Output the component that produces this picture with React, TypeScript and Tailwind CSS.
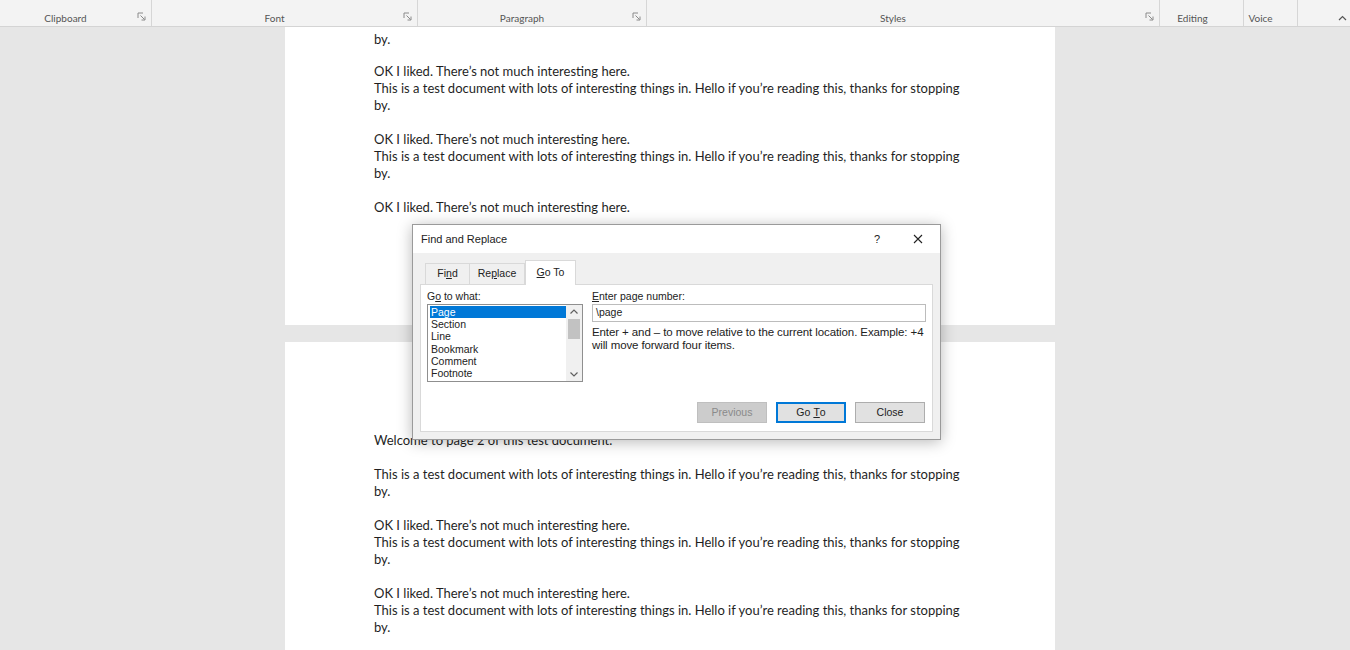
const longLine =
  "This is a test document with lots of interesting things in. Hello if you\u2019re reading this, thanks for stopping";
const okLine = "OK I liked. There\u2019s not much interesting here.";

function Launcher() {
  return (
    <svg width="9" height="9" viewBox="0 0 9 9" className="mb-[2px]">
      <path d="M1 1h5M1 1v5" stroke="#8a8a8a" strokeWidth="1" fill="none" />
      <path d="M3.5 3.5l4 4M8 4.5v3.5h-3.5" stroke="#8a8a8a" strokeWidth="1" fill="none" />
    </svg>
  );
}

function Group({ label, width, launcher = true }: { label: string; width: number; launcher?: boolean }) {
  return (
    <div className="flex items-end h-full border-r border-[#d6d6d6] pb-[3px]" style={{ width }}>
      <div className="flex-1 text-center text-[10px] text-[#555] leading-none">{label}</div>
      <div className="w-[20px] flex justify-center">{launcher && <Launcher />}</div>
    </div>
  );
}

function Ribbon() {
  return (
    <div className="h-[27px] bg-[#f3f3f3] border-b border-[#d4d4d4] flex">
      <Group label="Clipboard" width={152} />
      <Group label="Font" width={266} />
      <Group label="Paragraph" width={229} />
      <Group label="Styles" width={513} />
      <div className="w-[2px]" />
      <Group label="Editing" width={82} launcher={false} />
      <Group label="Voice" width={54} launcher={false} />
      <div className="flex-1 flex justify-end items-end pr-[3px] pb-[5px]">
        <svg width="9" height="6" viewBox="0 0 9 6">
          <path d="M1 5l3.5-3.5L8 5" stroke="#555" strokeWidth="1.2" fill="none" />
        </svg>
      </div>
    </div>
  );
}

function Para({ ok = true }: { ok?: boolean }) {
  return (
    <>
      {ok && <p>{okLine}</p>}
      <p>{longLine}</p>
      <p>by.</p>
      <p>&nbsp;</p>
    </>
  );
}

function Dialog() {
  const items = ["Page", "Section", "Line", "Bookmark", "Comment", "Footnote"];
  return (
    <div className="absolute left-[412px] top-[224px] w-[529px] h-[216px] bg-[#f0f0f0] border border-[#9a9a9a] shadow-[0_2px_14px_rgba(0,0,0,0.28)] flex flex-col text-[10px] text-[#222] font-['Liberation_Sans',sans-serif]">
      <div className="h-[28px] bg-white flex items-center pl-[8px] shrink-0">
        <span className="text-[11px] flex-1">Find and Replace</span>
        <span className="w-[12px] text-[11px] text-center mr-[30px]">?</span>
        <svg width="10" height="10" viewBox="0 0 10 10" className="mr-[17px]">
          <path d="M1 1l8 8M9 1l-8 8" stroke="#222" strokeWidth="1.1" />
        </svg>
      </div>
      <div className="flex-1 px-[7px] pt-[7px] pb-[7px] flex flex-col">
        <div className="flex items-end h-[24px] pl-[5px]">
          <div className="w-[45px] h-[21px] flex items-center justify-center border border-[#d9d9d9] border-b-0 bg-[#f0f0f0] text-[10.5px]">
            Fi<span className="underline">n</span>d
          </div>
          <div className="w-[55px] h-[21px] flex items-center justify-center border border-[#d9d9d9] border-b-0 border-l-0 bg-[#f0f0f0] text-[10.5px]">
            Re<span className="underline">p</span>lace
          </div>
          <div className="w-[51px] h-[25px] flex items-center justify-center border border-[#d9d9d9] border-b-0 bg-white -mb-px relative z-10 text-[10.5px]">
            <span className="underline">G</span>o To
          </div>
        </div>
        <div className="flex-1 bg-white border border-[#d9d9d9] flex flex-col px-[6px] pt-[5px]">
          <div className="flex gap-[9px]">
            <div className="w-[156px]">
              <div className="text-[10.5px] leading-[12px] mb-[2px]">
                G<span className="underline">o</span> to what:
              </div>
              <div className="h-[78px] border border-[#8f8f8f] flex text-[10.5px] leading-[12.2px]">
                <div className="flex-1 pl-[2px] pt-[1px]">
                  {items.map((it, i) => (
                    <div key={it} className={i === 0 ? "bg-[#0078d7] text-white pl-[1px]" : "pl-[1px]"}>
                      {it}
                    </div>
                  ))}
                </div>
                <div className="w-[16px] bg-[#f0f0f0] flex flex-col items-center">
                  <svg width="16" height="14" viewBox="0 0 16 14">
                    <path d="M4.5 8.5L8 5l3.5 3.5" stroke="#606060" strokeWidth="1.2" fill="none" />
                  </svg>
                  <div className="w-[12px] h-[20px] bg-[#c2c2c2]" />
                  <div className="flex-1" />
                  <svg width="16" height="14" viewBox="0 0 16 14">
                    <path d="M4.5 5.5L8 9l3.5-3.5" stroke="#606060" strokeWidth="1.2" fill="none" />
                  </svg>
                </div>
              </div>
            </div>
            <div className="flex-1">
              <div className="text-[10.5px] leading-[12px] mb-[2px]">
                <span className="underline">E</span>nter page number:
              </div>
              <div className="h-[18px] border border-[#bcbcbc] flex items-center pl-[3px] text-[10.5px]">\page</div>
              <div className="mt-[4px] text-[11.5px] leading-[13px] tracking-[-0.1px]">
                Enter + and – to move relative to the current location. Example: +4
                <br />
                will move forward four items.
              </div>
            </div>
          </div>
          <div className="flex justify-end gap-[9px] mt-[20px] pr-[1px]">
            <div className="w-[70px] h-[21px] border border-[#bfbfbf] bg-[#cccccc] text-[#8a8a8a] flex items-center justify-center text-[10.5px]">
              Previous
            </div>
            <div className="w-[70px] h-[21px] border-2 border-[#0078d7] bg-[#e1e1e1] flex items-center justify-center text-[10.5px]">
              Go <span className="underline ml-[3px]">T</span>o
            </div>
            <div className="w-[70px] h-[21px] border border-[#adadad] bg-[#e1e1e1] flex items-center justify-center text-[10.5px]">
              Close
            </div>
          </div>
        </div>
      </div>
    </div>
  );
}

export default function App() {
  return (
    <div className="relative w-[1350px] h-[650px] overflow-hidden bg-[#e6e6e6] font-['Lato',sans-serif]">
      <Ribbon />
      <div className="pl-[285px]">
        <div className="w-[770px] h-[298px] bg-white pl-[89px] pt-[4px] text-[13px] leading-[17px] text-[#1f1f1f]">
          <p className="-mb-[1px]">by.</p>
          <p className="-mb-[1px]">&nbsp;</p>
          <Para />
          <Para />
          <p>{okLine}</p>
        </div>
        <div className="w-[770px] h-[400px] bg-white mt-[17px] pl-[89px] pt-[90px] text-[13px] leading-[17px] text-[#1f1f1f]">
          <p>Welcome to page 2 of this test document.</p>
          <p>&nbsp;</p>
          <Para ok={false} />
          <Para />
          <Para />
          <p>{okLine}</p>
        </div>
      </div>
      <Dialog />
    </div>
  );
}
